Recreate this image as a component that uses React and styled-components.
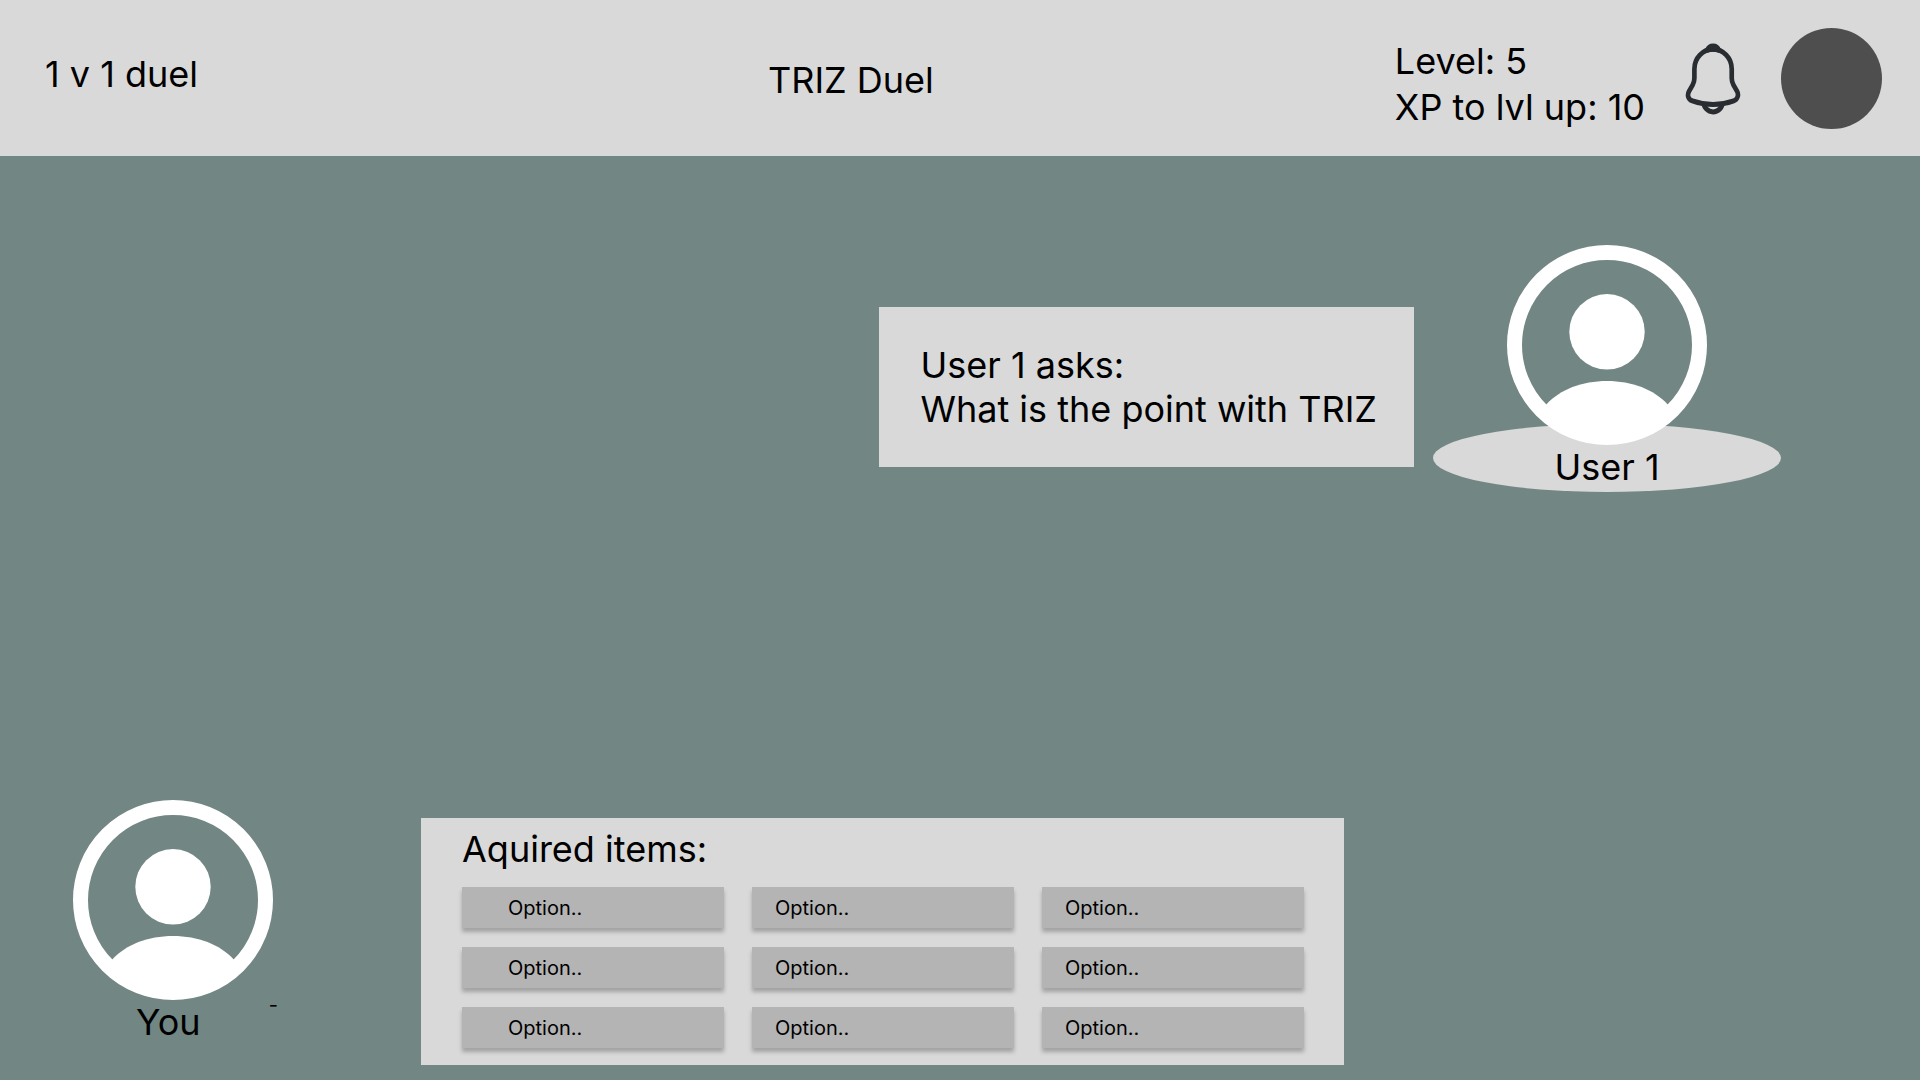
import React from "react";
import styled, { createGlobalStyle } from "styled-components";

const GlobalStyle = createGlobalStyle`
  *, *::before, *::after {
    box-sizing: border-box;
  }

  body {
    margin: 0;
    background: #728683;
    color: #000;
    font-family: Inter, "Liberation Sans", sans-serif;
    font-size: 36px;
    line-height: 44px;
  }

  h1, h2, p {
    margin: 0;
    font-size: inherit;
    font-weight: inherit;
  }

  button {
    border: 0;
    padding: 0;
    color: inherit;
    font: inherit;
    cursor: pointer;
  }
`;

const Page = styled.div`
  display: flex;
  flex-direction: column;
  min-height: 100vh;
`;

const Header = styled.header`
  display: grid;
  grid-template-columns: 40% 1fr auto;
  align-items: center;
  padding: 27px 0 26px;
  background: #d9d9d9;
`;

const Mode = styled.p`
  padding: 0 0 9px 45px;
`;

const Title = styled.h1`
  padding-top: 3px;
`;

const Account = styled.div`
  display: flex;
  align-items: center;
  gap: 40px;
  padding-right: 38px;
`;

const Stats = styled.div`
  padding-top: 11px;
  line-height: 46px;
  white-space: nowrap;
`;

const BellButton = styled.button`
  display: flex;
  background: none;
`;

const ProfileButton = styled.button`
  width: 101px;
  height: 101px;
  border-radius: 50%;
  background: #4e4e4e;
`;

const Arena = styled.main`
  display: flex;
  flex: 1;
  flex-direction: column;
  justify-content: space-between;
  gap: 40px;
  padding: 89px 0 15px;
`;

const OpponentRow = styled.section`
  display: flex;
  align-items: flex-start;
  justify-content: flex-end;
  gap: 19px;
  padding-right: 139px;
`;

const Question = styled.div`
  margin-top: 62px;
  padding: 36px 37px 36px 41px;
  background: #d9d9d9;
`;

const Opponent = styled.div`
  display: flex;
  flex-direction: column;
  align-items: center;
`;

const Portrait = styled.svg`
  position: relative;
  display: block;
  width: 200px;
  height: 200px;
  flex: none;
`;

const Plate = styled.p`
  width: 348px;
  height: 68px;
  margin-top: -21px;
  padding-top: 21px;
  border-radius: 50%;
  background: #d9d9d9;
  text-align: center;
`;

const PlayerRow = styled.section`
  display: flex;
  align-items: flex-start;
  gap: 143px;
  padding: 0 73px;
`;

const Player = styled.div`
  flex: none;
  width: 205px;
`;

const Caption = styled.div`
  display: flex;
  align-items: flex-start;
  justify-content: space-between;
  padding-left: 63px;
`;

const Dash = styled.span`
  font-size: 20px;
  line-height: 10px;
`;

const Items = styled.div`
  flex: 1;
  max-width: 923px;
  margin-top: 18px;
  padding: 9px 40px 17px 41px;
  background: #d9d9d9;
`;

const ItemGrid = styled.div`
  display: grid;
  grid-template-columns: repeat(3, 1fr);
  gap: 19px 28px;
  margin-top: 16px;
`;

const ItemButton = styled.button`
  height: 41px;
  padding-left: ${({ $inset }) => $inset}px;
  background: #b4b4b4;
  box-shadow: 0 4px 4px rgba(0, 0, 0, 0.25);
  font-size: 20px;
  line-height: 24px;
  text-align: left;
`;

function PersonIcon() {
  return (
    <Portrait viewBox="0 0 200 200" aria-hidden="true">
      <circle cx="100" cy="100" r="92.5" fill="none" stroke="#fff" strokeWidth="15" />
      <circle cx="100" cy="86.8" r="37.7" fill="#fff" />
      <path
        d="M39.5 159.3C53 144.5 75 136 100 136S147 144.5 160.5 159.3L165 165A92.5 92.5 0 0 1 35 165Z"
        fill="#fff"
      />
    </Portrait>
  );
}

function BellIcon() {
  return (
    <svg
      width="56"
      height="72"
      viewBox="3 1 18 22"
      preserveAspectRatio="none"
      fill="none"
      stroke="#292d32"
      strokeWidth="1.5"
      strokeLinejoin="round"
      aria-hidden="true"
    >
      <path d="M12.02 2.91C8.71 2.91 6.02 5.6 6.02 8.91V11.8C6.02 12.41 5.76 13.34 5.45 13.86L4.3 15.77C3.59 16.95 4.08 18.26 5.38 18.7C9.69 20.14 14.34 20.14 18.65 18.7C19.86 18.3 20.39 16.87 19.73 15.77L18.58 13.86C18.28 13.34 18.02 12.41 18.02 11.8V8.91C18.02 5.61 15.32 2.91 12.02 2.91Z" />
      <path d="M13.87 3.2C13.56 3.11 13.24 3.04 12.91 3C11.95 2.88 11.03 2.95 10.17 3.2C10.46 2.46 11.18 1.94 12.02 1.94C12.86 1.94 13.58 2.46 13.87 3.2Z" />
      <path d="M15.02 19.3C15.02 20.71 13.67 22.06 12.02 22.06C11.2 22.06 10.44 21.72 9.9 21.18C9.36 20.64 9.02 19.88 9.02 19.3" />
    </svg>
  );
}

const COLUMN_INSETS = [46, 23, 23];
const ITEMS = Array.from({ length: 9 }, (_, id) => ({
  id,
  label: "Option..",
  inset: COLUMN_INSETS[id % 3],
}));

export default function App() {
  return (
    <Page>
      <GlobalStyle />
      <Header>
        <Mode>1 v 1 duel</Mode>
        <Title>TRIZ Duel</Title>
        <Account>
          <Stats>
            <p>Level: 5</p>
            <p>XP to lvl up: 10</p>
          </Stats>
          <BellButton type="button" aria-label="Notifications">
            <BellIcon />
          </BellButton>
          <ProfileButton type="button" aria-label="Profile" />
        </Account>
      </Header>
      <Arena>
        <OpponentRow>
          <Question>
            <p>User 1 asks:</p>
            <p>What is the point with TRIZ</p>
          </Question>
          <Opponent>
            <PersonIcon />
            <Plate>User 1</Plate>
          </Opponent>
        </OpponentRow>
        <PlayerRow>
          <Player>
            <PersonIcon />
            <Caption>
              <p>You</p>
              <Dash>-</Dash>
            </Caption>
          </Player>
          <Items>
            <h2>Aquired items:</h2>
            <ItemGrid>
              {ITEMS.map((item) => (
                <ItemButton key={item.id} type="button" $inset={item.inset}>
                  {item.label}
                </ItemButton>
              ))}
            </ItemGrid>
          </Items>
        </PlayerRow>
      </Arena>
    </Page>
  );
}
